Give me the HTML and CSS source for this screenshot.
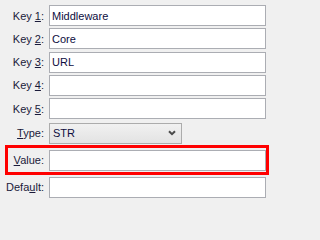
FILE: index.html
```
<!DOCTYPE html>
<html>
<head>
<meta charset="utf-8">
<link rel="stylesheet" href="styles.css">
</head>
<body>
<div class="form">
  <div class="keys">
    <div class="row"><label class="lbl">Key <u>1</u>:</label><input class="field" type="text" value="Middleware"></div>
    <div class="row"><label class="lbl">Key <u>2</u>:</label><input class="field" type="text" value="Core"></div>
    <div class="row"><label class="lbl">Key <u>3</u>:</label><input class="field" type="text" value="URL"></div>
    <div class="row"><label class="lbl">Key <u>4</u>:</label><input class="field" type="text" value=""></div>
    <div class="row"><label class="lbl">Key <u>5</u>:</label><input class="field" type="text" value=""></div>
  </div>
  <div class="row row-select">
    <label class="lbl"><u>T</u>ype:</label>
    <div class="select">
      <span>STR</span>
      <svg class="chev" width="8" height="6" viewBox="0 0 8 6"><path d="M1 1.2 L4 4.2 L7 1.2" fill="none" stroke="#4a4a4a" stroke-width="2"/></svg>
    </div>
  </div>
  <div class="highlight">
    <div class="row"><label class="lbl lbl-in"><u>V</u>alue:</label><input class="field" type="text" value=""></div>
  </div>
  <div class="row row-default"><label class="lbl">Defa<u>u</u>lt:</label><input class="field" type="text" value=""></div>
</div>
</body>
</html>
```
FILE: styles.css
```
html, body {
  margin: 0;
  padding: 0;
  background: #f0f0f0;
}
body {
  font-family: "Liberation Sans", Arial, sans-serif;
  font-size: 11px;
  color: #151535;
}
.form {
  width: 271px;
  box-sizing: border-box;
  padding: 5px 5px 0 5px;
  display: flex;
  flex-direction: column;
}
.keys {
  display: flex;
  flex-direction: column;
  gap: 2.33px;
}
.row {
  display: flex;
  align-items: center;
  height: 21px;
}
.lbl {
  width: 39px;
  flex: none;
  text-align: right;
  margin-right: 5px;
  white-space: nowrap;
  color: #1a1a3a;
}
.lbl-in {
  width: 36px;
}
.lbl u {
  text-decoration-thickness: 1px;
  text-underline-offset: 1px;
}
.field {
  flex: 1;
  min-width: 0;
  height: 21px;
  box-sizing: border-box;
  border: 1px solid #abadb3;
  background: #fff;
  margin: 0;
  padding: 0 2px;
  font-family: "Liberation Sans", Arial, sans-serif;
  font-size: 11px;
  color: #0d0d40;
  outline: none;
}
.row-select {
  margin-top: 3.67px;
}
.select {
  width: 133px;
  height: 21px;
  box-sizing: border-box;
  border: 1px solid #acacac;
  background: linear-gradient(#f1f1f1, #e3e3e3);
  display: flex;
  align-items: center;
  justify-content: space-between;
  padding: 0 5px 0 3px;
  color: #0d0d40;
}
.chev {
  display: block;
}
.highlight {
  margin-top: 1px;
  margin-right: -3px;
  border: 3px solid #ff0000;
  padding: 2px 0 1px 0;
}
.row-default {
  margin-top: 2px;
}
```
